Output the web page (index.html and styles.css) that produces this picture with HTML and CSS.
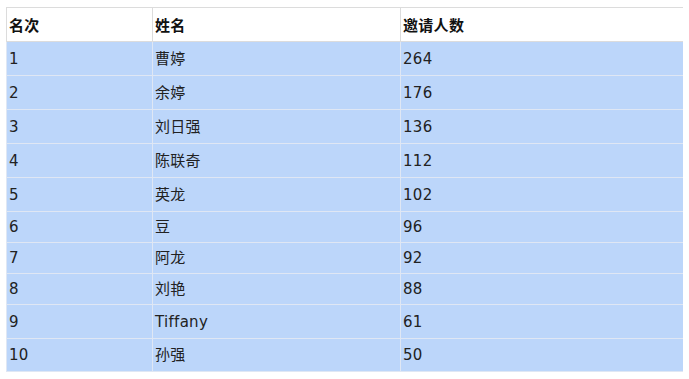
FILE: index.html
```html
<!DOCTYPE html>
<html lang="zh">
<head>
<meta charset="utf-8">
<link rel="stylesheet" href="styles.css">
</head>
<body>
<table class="rank">
  <colgroup><col class="c1"><col class="c2"><col class="c3"></colgroup>
  <thead>
    <tr><th>名次</th><th>姓名</th><th>邀请人数</th></tr>
  </thead>
  <tbody>
    <tr><td>1</td><td>曹婷</td><td>264</td></tr>
    <tr><td>2</td><td>余婷</td><td>176</td></tr>
    <tr><td>3</td><td>刘日强</td><td>136</td></tr>
    <tr><td>4</td><td>陈联奇</td><td>112</td></tr>
    <tr><td>5</td><td>英龙</td><td>102</td></tr>
    <tr class="short"><td>6</td><td>豆</td><td>96</td></tr>
    <tr class="short"><td>7</td><td>阿龙</td><td>92</td></tr>
    <tr class="short"><td>8</td><td>刘艳</td><td>88</td></tr>
    <tr><td>9</td><td>Tiffany</td><td>61</td></tr>
    <tr><td>10</td><td>孙强</td><td>50</td></tr>
  </tbody>
</table>
</body>
</html>
```
FILE: styles.css
```css
html, body { background: #fff; }
body {
  margin: 7px 6px;
  font-family: "DejaVu Sans", "Noto Sans CJK SC", sans-serif;
  font-size: 15px;
  letter-spacing: 0.3px;
  color: #222;
}
.rank {
  border-collapse: collapse;
  width: 677px;
  table-layout: fixed;
}
.c1 { width: 146px; }
.c2 { width: 248px; }
.c3 { width: 283px; }
.rank th, .rank td {
  text-align: left;
  padding: 0 2px;
  height: 33px;
  vertical-align: middle;
  white-space: nowrap;
}
.rank th {
  font-family: "Noto Sans CJK SC", sans-serif;
  font-weight: bold;
  color: #111;
  border: 1px solid #dcdcdc;
  background: #fff;
}
.rank td {
  background: #bcd6fa;
  border: 1px solid #dfe7f4;
  line-height: 20px;
}
.rank tr.short td { height: 30px; }
.rank tbody tr:last-child td { height: 32px; }
```
